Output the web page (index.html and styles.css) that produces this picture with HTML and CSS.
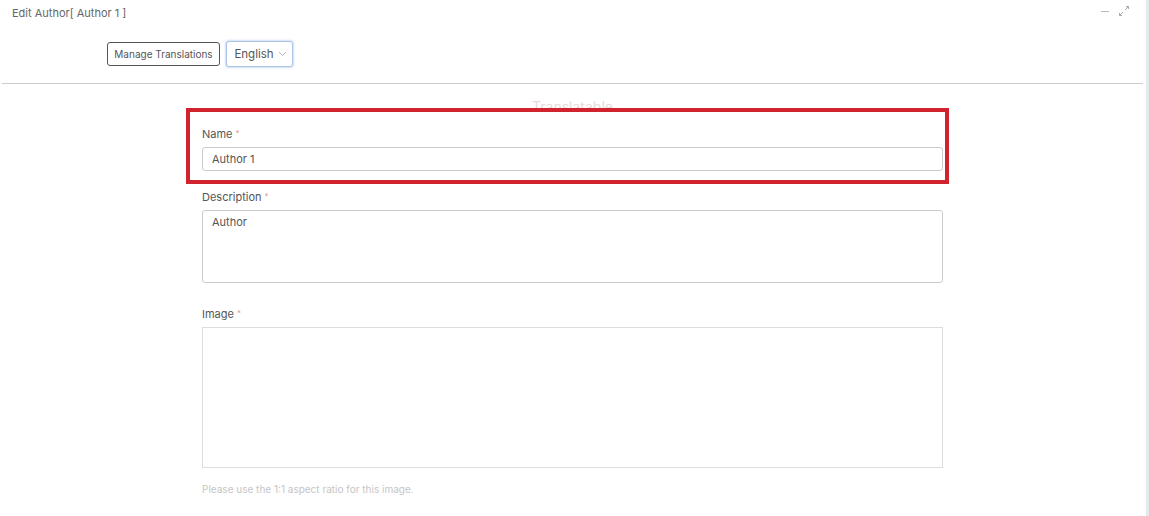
FILE: index.html
```html
<!DOCTYPE html>
<html>
<head>
<meta charset="utf-8">
<link rel="stylesheet" href="styles.css">
</head>
<body>
<div class="page">
  <div class="panel">
    <div class="head">
      <div class="title">Edit Author[ Author 1 ]</div>
      <div class="tools">
        <svg class="ico" width="10" height="10" viewBox="0 0 10 10"><path d="M1 5.5H9" stroke="#bbb" stroke-width="1"/></svg>
        <svg class="ico" width="12" height="12" viewBox="0 0 12 12" fill="none" stroke="#aaa" stroke-width="1"><path d="M7 5L10.5 1.5M8 1.5H10.5V4"/><path d="M5 7L1.5 10.5M1.5 8V10.5H4"/></svg>
      </div>
    </div>
    <div class="bar">
      <button class="btn-manage">Manage Translations</button>
      <button class="btn-lang">English <svg width="9" height="6" viewBox="0 0 9 6" fill="none" stroke="#aab" stroke-width="0.9"><path d="M1 1L4.5 4.5L8 1"/></svg></button>
    </div>
    <hr class="sep">
    <div class="form">
      <div class="section">Translatable</div>
      <div class="field field-name">
        <label class="lbl">Name <span class="req">*</span></label>
        <div class="input">Author 1</div>
      </div>
      <div class="field field-desc">
        <label class="lbl">Description <span class="req">*</span></label>
        <div class="textarea">Author</div>
      </div>
      <div class="field field-img">
        <label class="lbl">Image <span class="req">*</span></label>
        <div class="imgbox"></div>
        <div class="help">Please use the 1:1 aspect ratio for this image.</div>
      </div>
      <div class="highlight"></div>
    </div>
  </div>
  <div class="scroll"></div>
</div>
</body>
</html>
```
FILE: styles.css
```css
* { box-sizing: border-box; }
html, body { margin: 0; padding: 0; background: #fff; }
body { font-family: Inter, "Noto Sans", sans-serif; color: #555; width: 1149px; height: 516px; overflow: hidden; }
.page { display: flex; height: 516px; }
.panel { flex: 1; padding: 0 3px 0 2px; }
.scroll { width: 3px; background: #e4e9ee; }
.head { display: flex; justify-content: space-between; align-items: center; padding: 5px 13px 0 10px; height: 20px; }
.title { font-size: 11px; color: #666; }
.tools { display: flex; gap: 8px; align-items: center; margin-top: -4px; }
.bar { display: flex; align-items: center; gap: 6px; margin: 21px 0 16px 105px; height: 26px; }
.btn-manage { font-family: inherit; font-size: 10px; color: #555; background: #fff; border: 1px solid #555; border-radius: 3px; height: 24px; width: 113px; padding: 0; }
.btn-lang { font-family: inherit; font-size: 11.5px; color: #555; background: #fff; border: 1px solid #a9c4e4; border-radius: 3px; height: 26px; width: 67px; padding: 0 0 0 2px; box-shadow: 0 0 2px 1px rgba(120,160,220,0.35); display: flex; align-items: center; justify-content: center; gap: 4px; }
.sep { margin: 0; border: 0; border-top: 1px solid #ccc; }
.form { position: relative; width: 741px; margin: 0 auto; padding-top: 15px; }
.section { text-align: center; font-size: 14px; color: #e6dada; height: 15px; line-height: 15px; }
.field { display: flex; flex-direction: column; }
.lbl { font-size: 11px; color: #555; height: 14px; line-height: 14px; margin-top: 12px; margin-bottom: 7px; }
.field-desc .lbl { margin-top: 18px; }
.field-img .lbl { margin-top: 23px; }
.req { color: #e89a9a; font-size: 8px; vertical-align: 2px; }
.input { height: 24px; border: 1px solid #ccc; border-radius: 3px; padding: 0 9px; font-size: 11px; line-height: 22px; color: #555; }
.textarea { height: 73px; border: 1px solid #ccc; border-radius: 3px; padding: 4px 9px; font-size: 11px; line-height: 14px; color: #555; }
.imgbox { height: 141px; border: 1px solid #ddd; }
.help { font-size: 10px; color: #c6c6c6; margin-top: 15px; line-height: 12px; }
.highlight { position: absolute; left: -16px; top: 24px; width: 763px; height: 76px; border: 4px solid #d0232e; pointer-events: none; }
```
